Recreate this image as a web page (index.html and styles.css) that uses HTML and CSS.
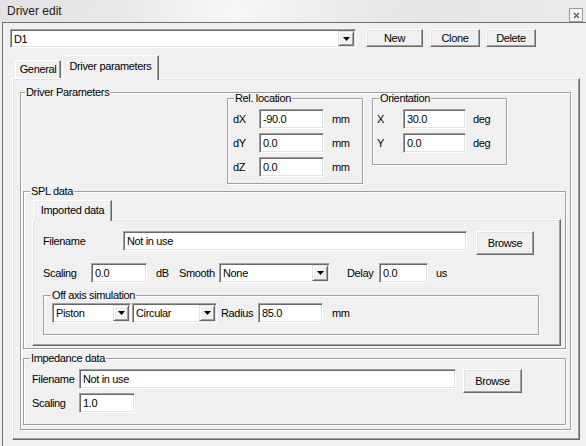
FILE: index.html
```html
<!DOCTYPE html>
<html>
<head>
<meta charset="utf-8">
<title>Driver edit</title>
<link rel="stylesheet" href="styles.css">
</head>
<body>
<div class="titlebar">
  <span class="title">Driver edit</span>
  <span class="close"><svg width="7" height="7" viewBox="0 0 7 7"><path d="M1 1L6 6M6 1L1 6" stroke="#555" stroke-width="1.1" fill="none"/></svg></span>
</div>
<div class="window">
  <div class="toprow">
    <div class="combo c-main"><span class="cval">D1</span><span class="arrow"><svg width="7" height="4" viewBox="0 0 7 4"><path d="M0 0H7L3.5 4Z"/></svg></span></div>
    <button class="btn b-new">New</button>
    <button class="btn b-clone">Clone</button>
    <button class="btn b-del">Delete</button>
  </div>
  <div class="tabstrip">
    <div class="tab t-general">General</div>
    <div class="tab t-driver">Driver parameters</div>
  </div>
  <div class="page">
    <fieldset class="grp g-driver">
      <legend class="lg-driver">Driver Parameters</legend>
      <div class="row-a">
        <fieldset class="grp g-rel">
          <legend>Rel. location</legend>
          <div class="gin-rel">
            <div class="frow"><span class="lbl w26">dX</span><span class="edit w65">-90.0</span><span class="unit">mm</span></div>
            <div class="frow"><span class="lbl w26">dY</span><span class="edit w65">0.0</span><span class="unit">mm</span></div>
            <div class="frow"><span class="lbl w26">dZ</span><span class="edit w65">0.0</span><span class="unit">mm</span></div>
          </div>
        </fieldset>
        <fieldset class="grp g-orient">
          <legend>Orientation</legend>
          <div class="gin-orient">
            <div class="frow"><span class="lbl w26">X</span><span class="edit w63">30.0</span><span class="unit u7">deg</span></div>
            <div class="frow"><span class="lbl w26">Y</span><span class="edit w63">0.0</span><span class="unit u7">deg</span></div>
          </div>
        </fieldset>
      </div>
      <fieldset class="grp g-spl">
        <legend>SPL data</legend>
        <div class="gin-spl">
          <div class="subtabs">
            <div class="tab t-imported">Imported data</div>
          </div>
          <div class="subpage">
            <div class="r1">
              <span class="lbl l-file">Filename</span>
              <span class="edit ed-file">Not in use</span>
              <button class="btn b-browse">Browse</button>
            </div>
            <div class="r2">
              <span class="lbl l-scal">Scaling</span>
              <span class="edit w56">0.0</span>
              <span class="lbl l-db">dB</span>
              <span class="lbl l-smooth">Smooth</span>
              <div class="combo c-smooth"><span class="cval">None</span><span class="arrow"><svg width="7" height="4" viewBox="0 0 7 4"><path d="M0 0H7L3.5 4Z"/></svg></span></div>
              <span class="lbl l-delay">Delay</span>
              <span class="edit w49">0.0</span>
              <span class="unit">us</span>
            </div>
            <fieldset class="grp g-off">
              <legend class="lg-off">Off axis simulation</legend>
              <div class="gin-off">
                <div class="r3">
                  <div class="combo c-piston"><span class="cval">Piston</span><span class="arrow"><svg width="7" height="4" viewBox="0 0 7 4"><path d="M0 0H7L3.5 4Z"/></svg></span></div>
                  <div class="combo c-circ"><span class="cval">Circular</span><span class="arrow"><svg width="7" height="4" viewBox="0 0 7 4"><path d="M0 0H7L3.5 4Z"/></svg></span></div>
                  <span class="lbl l-radius">Radius</span>
                  <span class="edit w65">85.0</span>
                  <span class="unit u9">mm</span>
                </div>
              </div>
            </fieldset>
          </div>
        </div>
      </fieldset>
      <fieldset class="grp g-imp">
        <legend>Impedance data</legend>
        <div class="gin-imp">
          <div class="r4">
            <span class="lbl l-imp">Filename</span>
            <span class="edit ed-imp">Not in use</span>
            <button class="btn b-browse2">Browse</button>
          </div>
          <div class="r5">
            <span class="lbl l-imp">Scaling</span>
            <span class="edit w56">1.0</span>
          </div>
        </div>
      </fieldset>
    </fieldset>
  </div>
</div>
</body>
</html>
```
FILE: styles.css
```css
* { box-sizing: border-box; }
html, body { margin: 0; padding: 0; }
body {
  width: 586px; height: 446px; overflow: hidden;
  background: #f0f0f0;
  font-family: "Liberation Sans", Arial, sans-serif;
  font-size: 11px; line-height: 13px; letter-spacing: -0.35px;
  color: #000;
}
.titlebar {
  height: 22px; display: flex; justify-content: space-between; align-items: flex-start;
  background: linear-gradient(100deg, #e2e2e2 0%, #e9e9e9 22%, #f7f7f7 40%, #eeeeee 52%, #e5e5e5 72%, #ebebeb 100%);
}
.title { font-size: 12px; letter-spacing: 0; line-height: 14px; margin: 4px 0 0 7px; color: #1c1c1c; }
.close {
  width: 14px; height: 14px; margin: 8px 3px 0 0;
  border: 1px solid #9a9a9a; background: #f5f5f5;
  display: flex; align-items: center; justify-content: center;
}
.window {
  margin-left: 2px; height: 424px;
  border-top: 1px solid #6f6f6f; border-left: 1px solid #6f6f6f;
  padding: 6px 0 0 7px;
}
.toprow { display: flex; align-items: flex-start; height: 19px; }

.edit, .combo {
  background: #fff; height: 20px;
  border: 1px solid; border-color: #a0a0a0 #fff #fff #a0a0a0;
  box-shadow: inset 1px 1px 0 #696969, inset -1px -1px 0 #e3e3e3;
  flex: none;
}
.edit { padding-left: 3px; line-height: 18px; white-space: nowrap; overflow: hidden; }
.combo { display: flex; padding: 1px; }
.cval { flex: 1; padding-left: 2px; line-height: 16px; white-space: nowrap; overflow: hidden; }
.arrow {
  width: 16px; height: 100%; flex: none; background: #f0f0f0;
  border: 1px solid; border-color: #e3e3e3 #696969 #696969 #e3e3e3;
  box-shadow: inset 1px 1px 0 #fff, inset -1px -1px 0 #a0a0a0;
  display: flex; align-items: center; justify-content: center;
}
.c-main { width: 346px; height: 19px; }

.btn {
  font: inherit; letter-spacing: inherit; color: #000;
  margin: 0; padding: 0; flex: none;
  background: #f0f0f0;
  border: 1px solid; border-color: #fff #696969 #696969 #fff;
  box-shadow: inset -1px -1px 0 #a0a0a0, inset 1px 1px 0 #e3e3e3;
  height: 18px; text-align: center;
}
.b-new { margin-left: 10px; width: 57px; }
.b-clone { margin-left: 7px; width: 50px; }
.b-del { margin-left: 6px; width: 50px; }

.tabstrip { display: flex; align-items: flex-end; height: 23px; margin-top: 7px; padding-left: 5px; }
.tab {
  background: #f0f0f0; text-align: center; white-space: nowrap;
  border: 1px solid; border-bottom: 0; border-color: #fff #696969 transparent #fff;
  box-shadow: inset -1px 0 0 #a0a0a0;
}
.t-general { width: 46px; height: 18px; padding-top: 2px; }
.t-driver { width: 97px; height: 25px; margin-left: 1px; margin-bottom: -2px; padding-top: 4px; position: relative; z-index: 1; }

.page, .subpage {
  border: 1px solid; border-color: #fff #696969 #696969 #fff;
  box-shadow: inset -1px -1px 0 #a0a0a0, inset 1px 1px 0 #e3e3e3;
}
.page { margin-left: 2px; width: 568px; height: 362px; padding: 7px 0 0 7px; }

.grp {
  margin: 0; padding: 0; min-width: 0;
  border: 1px solid #a0a0a0;
  box-shadow: inset 1px 1px 0 #fff, 1px 1px 0 #fff;
}
legend { padding: 0 1px; margin-left: 6px; line-height: 13px; height: 13px; white-space: nowrap; }
.lg-driver { margin-left: 4px; }
.lg-off { margin-left: 7px; }

.g-driver { width: 551px; padding-bottom: 4px; }
.row-a { display: flex; align-items: flex-start; margin: -7px 0 0 206px; }
.g-rel { width: 136px; }
.g-orient { width: 135px; margin-left: 9px; }
.gin-rel { height: 78px; padding: 4px 0 0 5px; }
.gin-orient { height: 59px; padding: 4px 0 0 4px; }
.frow { display: flex; align-items: center; height: 20px; margin-bottom: 4px; }
.lbl { flex: none; white-space: nowrap; }
.w26 { width: 26px; }
.w65 { width: 65px; }
.w63 { width: 63px; }
.w56 { width: 56px; }
.w49 { width: 49px; }
.unit { margin-left: 8px; white-space: nowrap; }
.u7 { margin-left: 7px; }
.u9 { margin-left: 9px; }

.g-spl { width: 543px; margin: 1px 0 0 2px; }
.gin-spl { height: 150px; padding-top: 2px; }
.subtabs { display: flex; align-items: flex-end; height: 19px; padding-left: 9px; }
.t-imported { width: 79px; height: 21px; margin-bottom: -2px; padding-top: 3px; position: relative; z-index: 1; }
.subpage { margin-left: 8px; width: 529px; height: 127px; padding: 11px 0 0 10px; }

.r1 { display: flex; align-items: flex-start; height: 24px; }
.l-file { width: 80px; line-height: 20px; }
.ed-file { width: 344px; }
.b-browse { margin-left: 9px; width: 58px; height: 24px; }
.r2 { display: flex; align-items: center; height: 20px; margin-top: 8px; }
.l-scal { width: 48px; }
.l-db { margin-left: 9px; width: 23px; }
.l-smooth { width: 40px; }
.c-smooth { width: 111px; }
.l-delay { margin-left: 17px; width: 32px; }

.g-off { width: 496px; margin-top: 6px; }
.gin-off { height: 32px; padding: 1px 0 0 8px; }
.r3 { display: flex; align-items: center; height: 20px; }
.c-piston { width: 79px; }
.c-circ { width: 85px; margin-left: 1px; }
.l-radius { margin-left: 4px; width: 37px; }

.g-imp { width: 543px; margin: 3px 0 0 2px; }
.gin-imp { height: 59px; padding: 4px 0 0 8px; }
.r4 { display: flex; align-items: flex-start; height: 24px; }
.l-imp { width: 47px; line-height: 20px; }
.ed-imp { width: 377px; }
.b-browse2 { margin-left: 7px; width: 59px; height: 24px; }
.r5 { display: flex; align-items: center; height: 20px; }
```
